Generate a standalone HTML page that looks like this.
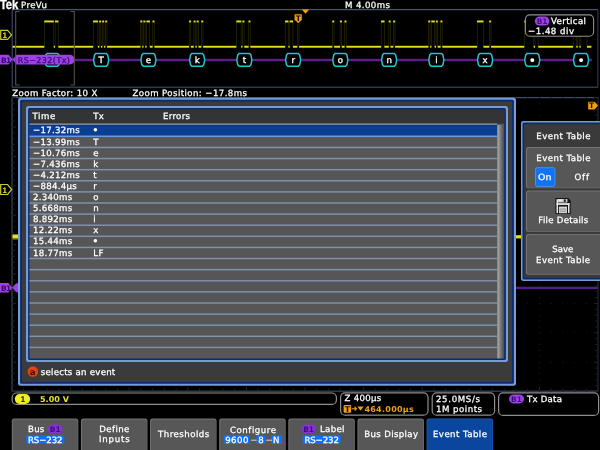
<!DOCTYPE html>
<html lang="en"><head><meta charset="utf-8"><title>Tek RS-232 Event Table</title>
<style>
html,body{margin:0;padding:0;background:#000;}
body{width:600px;height:450px;position:relative;overflow:hidden;font-family:'DejaVu Sans','Liberation Sans',sans-serif;}
#scr{position:absolute;left:0;top:0;width:600px;height:450px;overflow:hidden;background:#000;}
svg{position:absolute;left:0;top:0;}
.t{position:absolute;white-space:pre;margin:0;padding:0;}
#tx{position:absolute;left:0;top:0;width:600px;height:450px;will-change:transform;text-rendering:geometricPrecision;}
</style></head><body><div id="scr">
<svg width="600" height="450" viewBox="0 0 600 450">
<rect x="12.00" y="9.00" width="586.00" height="1.20" fill="#40587a"/>
<rect x="12.00" y="86.60" width="586.00" height="1.20" fill="#33486a"/>
<rect x="11.60" y="9.00" width="1.20" height="78.50" fill="#33486a"/>
<rect x="597.20" y="9.00" width="1.20" height="78.50" fill="#263650"/>
<rect x="44.11" y="21.50" width="0.70" height="25.30" fill="#2c2a00"/>
<rect x="53.27" y="21.50" width="0.70" height="25.30" fill="#2c2a00"/>
<rect x="54.79" y="21.50" width="0.70" height="25.30" fill="#2c2a00"/>
<rect x="57.85" y="21.50" width="0.70" height="25.30" fill="#2c2a00"/>
<rect x="92.90" y="21.50" width="0.70" height="25.30" fill="#2c2a00"/>
<rect x="97.47" y="21.50" width="0.70" height="25.30" fill="#2c2a00"/>
<rect x="99.00" y="21.50" width="0.70" height="25.30" fill="#2c2a00"/>
<rect x="100.53" y="21.50" width="0.70" height="25.30" fill="#2c2a00"/>
<rect x="102.05" y="21.50" width="0.70" height="25.30" fill="#2c2a00"/>
<rect x="103.58" y="21.50" width="0.70" height="25.30" fill="#2c2a00"/>
<rect x="105.10" y="21.50" width="0.70" height="25.30" fill="#2c2a00"/>
<rect x="106.63" y="21.50" width="0.70" height="25.30" fill="#2c2a00"/>
<rect x="140.22" y="21.50" width="0.70" height="25.30" fill="#2c2a00"/>
<rect x="141.74" y="21.50" width="0.70" height="25.30" fill="#2c2a00"/>
<rect x="143.27" y="21.50" width="0.70" height="25.30" fill="#2c2a00"/>
<rect x="144.79" y="21.50" width="0.70" height="25.30" fill="#2c2a00"/>
<rect x="146.32" y="21.50" width="0.70" height="25.30" fill="#2c2a00"/>
<rect x="149.37" y="21.50" width="0.70" height="25.30" fill="#2c2a00"/>
<rect x="152.42" y="21.50" width="0.70" height="25.30" fill="#2c2a00"/>
<rect x="153.95" y="21.50" width="0.70" height="25.30" fill="#2c2a00"/>
<rect x="188.91" y="21.50" width="0.70" height="25.30" fill="#2c2a00"/>
<rect x="190.44" y="21.50" width="0.70" height="25.30" fill="#2c2a00"/>
<rect x="193.49" y="21.50" width="0.70" height="25.30" fill="#2c2a00"/>
<rect x="195.02" y="21.50" width="0.70" height="25.30" fill="#2c2a00"/>
<rect x="196.54" y="21.50" width="0.70" height="25.30" fill="#2c2a00"/>
<rect x="198.07" y="21.50" width="0.70" height="25.30" fill="#2c2a00"/>
<rect x="201.12" y="21.50" width="0.70" height="25.30" fill="#2c2a00"/>
<rect x="202.65" y="21.50" width="0.70" height="25.30" fill="#2c2a00"/>
<rect x="236.14" y="21.50" width="0.70" height="25.30" fill="#2c2a00"/>
<rect x="240.72" y="21.50" width="0.70" height="25.30" fill="#2c2a00"/>
<rect x="242.25" y="21.50" width="0.70" height="25.30" fill="#2c2a00"/>
<rect x="243.77" y="21.50" width="0.70" height="25.30" fill="#2c2a00"/>
<rect x="248.35" y="21.50" width="0.70" height="25.30" fill="#2c2a00"/>
<rect x="249.88" y="21.50" width="0.70" height="25.30" fill="#2c2a00"/>
<rect x="284.89" y="21.50" width="0.70" height="25.30" fill="#2c2a00"/>
<rect x="287.95" y="21.50" width="0.70" height="25.30" fill="#2c2a00"/>
<rect x="289.47" y="21.50" width="0.70" height="25.30" fill="#2c2a00"/>
<rect x="292.52" y="21.50" width="0.70" height="25.30" fill="#2c2a00"/>
<rect x="297.10" y="21.50" width="0.70" height="25.30" fill="#2c2a00"/>
<rect x="298.63" y="21.50" width="0.70" height="25.30" fill="#2c2a00"/>
<rect x="332.13" y="21.50" width="0.70" height="25.30" fill="#2c2a00"/>
<rect x="333.66" y="21.50" width="0.70" height="25.30" fill="#2c2a00"/>
<rect x="339.76" y="21.50" width="0.70" height="25.30" fill="#2c2a00"/>
<rect x="341.29" y="21.50" width="0.70" height="25.30" fill="#2c2a00"/>
<rect x="344.34" y="21.50" width="0.70" height="25.30" fill="#2c2a00"/>
<rect x="345.87" y="21.50" width="0.70" height="25.30" fill="#2c2a00"/>
<rect x="380.89" y="21.50" width="0.70" height="25.30" fill="#2c2a00"/>
<rect x="383.94" y="21.50" width="0.70" height="25.30" fill="#2c2a00"/>
<rect x="388.52" y="21.50" width="0.70" height="25.30" fill="#2c2a00"/>
<rect x="390.04" y="21.50" width="0.70" height="25.30" fill="#2c2a00"/>
<rect x="393.09" y="21.50" width="0.70" height="25.30" fill="#2c2a00"/>
<rect x="394.62" y="21.50" width="0.70" height="25.30" fill="#2c2a00"/>
<rect x="428.12" y="21.50" width="0.70" height="25.30" fill="#2c2a00"/>
<rect x="429.64" y="21.50" width="0.70" height="25.30" fill="#2c2a00"/>
<rect x="431.17" y="21.50" width="0.70" height="25.30" fill="#2c2a00"/>
<rect x="434.22" y="21.50" width="0.70" height="25.30" fill="#2c2a00"/>
<rect x="435.75" y="21.50" width="0.70" height="25.30" fill="#2c2a00"/>
<rect x="437.27" y="21.50" width="0.70" height="25.30" fill="#2c2a00"/>
<rect x="440.33" y="21.50" width="0.70" height="25.30" fill="#2c2a00"/>
<rect x="441.85" y="21.50" width="0.70" height="25.30" fill="#2c2a00"/>
<rect x="476.87" y="21.50" width="0.70" height="25.30" fill="#2c2a00"/>
<rect x="482.98" y="21.50" width="0.70" height="25.30" fill="#2c2a00"/>
<rect x="489.08" y="21.50" width="0.70" height="25.30" fill="#2c2a00"/>
<rect x="490.61" y="21.50" width="0.70" height="25.30" fill="#2c2a00"/>
<rect x="524.05" y="21.50" width="0.70" height="25.30" fill="#2c2a00"/>
<rect x="533.20" y="21.50" width="0.70" height="25.30" fill="#2c2a00"/>
<rect x="534.73" y="21.50" width="0.70" height="25.30" fill="#2c2a00"/>
<rect x="537.78" y="21.50" width="0.70" height="25.30" fill="#2c2a00"/>
<rect x="572.83" y="21.50" width="0.70" height="25.30" fill="#2c2a00"/>
<rect x="575.88" y="21.50" width="0.70" height="25.30" fill="#2c2a00"/>
<rect x="577.41" y="21.50" width="0.70" height="25.30" fill="#2c2a00"/>
<rect x="578.93" y="21.50" width="0.70" height="25.30" fill="#2c2a00"/>
<rect x="580.46" y="21.50" width="0.70" height="25.30" fill="#2c2a00"/>
<rect x="586.56" y="21.50" width="0.70" height="25.30" fill="#2c2a00"/>
<rect x="12.60" y="45.80" width="31.76" height="1.90" fill="#e6e01e"/>
<rect x="44.26" y="20.50" width="9.56" height="1.90" fill="#e6e01e"/>
<rect x="53.72" y="45.80" width="1.33" height="1.90" fill="#e6e01e"/>
<rect x="54.94" y="20.50" width="3.45" height="1.90" fill="#e6e01e"/>
<rect x="58.30" y="45.80" width="34.85" height="1.90" fill="#e6e01e"/>
<rect x="93.05" y="20.50" width="4.98" height="1.90" fill="#e6e01e"/>
<rect x="97.92" y="45.80" width="1.33" height="1.90" fill="#e6e01e"/>
<rect x="99.15" y="20.50" width="1.93" height="1.90" fill="#e6e01e"/>
<rect x="100.98" y="45.80" width="1.33" height="1.90" fill="#e6e01e"/>
<rect x="102.20" y="20.50" width="1.93" height="1.90" fill="#e6e01e"/>
<rect x="104.03" y="45.80" width="1.33" height="1.90" fill="#e6e01e"/>
<rect x="105.25" y="20.50" width="1.93" height="1.90" fill="#e6e01e"/>
<rect x="107.08" y="45.80" width="33.39" height="1.90" fill="#e6e01e"/>
<rect x="140.37" y="20.50" width="1.93" height="1.90" fill="#e6e01e"/>
<rect x="142.19" y="45.80" width="1.33" height="1.90" fill="#e6e01e"/>
<rect x="143.42" y="20.50" width="1.93" height="1.90" fill="#e6e01e"/>
<rect x="145.24" y="45.80" width="1.33" height="1.90" fill="#e6e01e"/>
<rect x="146.47" y="20.50" width="3.45" height="1.90" fill="#e6e01e"/>
<rect x="149.82" y="45.80" width="2.85" height="1.90" fill="#e6e01e"/>
<rect x="152.57" y="20.50" width="1.93" height="1.90" fill="#e6e01e"/>
<rect x="154.40" y="45.80" width="34.76" height="1.90" fill="#e6e01e"/>
<rect x="189.06" y="20.50" width="1.93" height="1.90" fill="#e6e01e"/>
<rect x="190.89" y="45.80" width="2.85" height="1.90" fill="#e6e01e"/>
<rect x="193.64" y="20.50" width="1.93" height="1.90" fill="#e6e01e"/>
<rect x="195.47" y="45.80" width="1.33" height="1.90" fill="#e6e01e"/>
<rect x="196.69" y="20.50" width="1.93" height="1.90" fill="#e6e01e"/>
<rect x="198.52" y="45.80" width="2.85" height="1.90" fill="#e6e01e"/>
<rect x="201.27" y="20.50" width="1.93" height="1.90" fill="#e6e01e"/>
<rect x="203.10" y="45.80" width="33.30" height="1.90" fill="#e6e01e"/>
<rect x="236.29" y="20.50" width="4.98" height="1.90" fill="#e6e01e"/>
<rect x="241.17" y="45.80" width="1.33" height="1.90" fill="#e6e01e"/>
<rect x="242.40" y="20.50" width="1.93" height="1.90" fill="#e6e01e"/>
<rect x="244.22" y="45.80" width="4.38" height="1.90" fill="#e6e01e"/>
<rect x="248.50" y="20.50" width="1.93" height="1.90" fill="#e6e01e"/>
<rect x="250.33" y="45.80" width="34.81" height="1.90" fill="#e6e01e"/>
<rect x="285.04" y="20.50" width="3.45" height="1.90" fill="#e6e01e"/>
<rect x="288.40" y="45.80" width="1.33" height="1.90" fill="#e6e01e"/>
<rect x="289.62" y="20.50" width="3.45" height="1.90" fill="#e6e01e"/>
<rect x="292.97" y="45.80" width="4.38" height="1.90" fill="#e6e01e"/>
<rect x="297.25" y="20.50" width="1.93" height="1.90" fill="#e6e01e"/>
<rect x="299.08" y="45.80" width="33.30" height="1.90" fill="#e6e01e"/>
<rect x="332.28" y="20.50" width="1.93" height="1.90" fill="#e6e01e"/>
<rect x="334.11" y="45.80" width="5.90" height="1.90" fill="#e6e01e"/>
<rect x="339.91" y="20.50" width="1.93" height="1.90" fill="#e6e01e"/>
<rect x="341.74" y="45.80" width="2.85" height="1.90" fill="#e6e01e"/>
<rect x="344.49" y="20.50" width="1.93" height="1.90" fill="#e6e01e"/>
<rect x="346.32" y="45.80" width="34.82" height="1.90" fill="#e6e01e"/>
<rect x="381.04" y="20.50" width="3.45" height="1.90" fill="#e6e01e"/>
<rect x="384.39" y="45.80" width="4.38" height="1.90" fill="#e6e01e"/>
<rect x="388.67" y="20.50" width="1.93" height="1.90" fill="#e6e01e"/>
<rect x="390.49" y="45.80" width="2.85" height="1.90" fill="#e6e01e"/>
<rect x="393.24" y="20.50" width="1.93" height="1.90" fill="#e6e01e"/>
<rect x="395.07" y="45.80" width="33.30" height="1.90" fill="#e6e01e"/>
<rect x="428.27" y="20.50" width="1.93" height="1.90" fill="#e6e01e"/>
<rect x="430.09" y="45.80" width="1.33" height="1.90" fill="#e6e01e"/>
<rect x="431.32" y="20.50" width="3.45" height="1.90" fill="#e6e01e"/>
<rect x="434.67" y="45.80" width="1.33" height="1.90" fill="#e6e01e"/>
<rect x="435.90" y="20.50" width="1.93" height="1.90" fill="#e6e01e"/>
<rect x="437.72" y="45.80" width="2.85" height="1.90" fill="#e6e01e"/>
<rect x="440.48" y="20.50" width="1.93" height="1.90" fill="#e6e01e"/>
<rect x="442.30" y="45.80" width="34.82" height="1.90" fill="#e6e01e"/>
<rect x="477.02" y="20.50" width="6.50" height="1.90" fill="#e6e01e"/>
<rect x="483.43" y="45.80" width="5.90" height="1.90" fill="#e6e01e"/>
<rect x="489.23" y="20.50" width="1.93" height="1.90" fill="#e6e01e"/>
<rect x="491.06" y="45.80" width="33.24" height="1.90" fill="#e6e01e"/>
<rect x="524.20" y="20.50" width="9.56" height="1.90" fill="#e6e01e"/>
<rect x="533.65" y="45.80" width="1.33" height="1.90" fill="#e6e01e"/>
<rect x="534.88" y="20.50" width="3.45" height="1.90" fill="#e6e01e"/>
<rect x="538.23" y="45.80" width="34.85" height="1.90" fill="#e6e01e"/>
<rect x="572.98" y="20.50" width="3.45" height="1.90" fill="#e6e01e"/>
<rect x="576.33" y="45.80" width="1.33" height="1.90" fill="#e6e01e"/>
<rect x="577.56" y="20.50" width="1.93" height="1.90" fill="#e6e01e"/>
<rect x="579.38" y="45.80" width="1.33" height="1.90" fill="#e6e01e"/>
<rect x="580.61" y="20.50" width="6.50" height="1.90" fill="#e6e01e"/>
<rect x="587.01" y="45.80" width="4.39" height="1.90" fill="#e6e01e"/>
<rect x="75.00" y="58.80" width="517.00" height="2.40" fill="#5a1c90"/>
<polygon points="47.16,53.50 57.46,53.50 58.86,54.90 59.86,59.90 58.86,64.90 57.46,66.30 47.16,66.30 45.76,64.90 44.76,59.90 45.76,54.90" fill="#000" stroke="#22c4cc" stroke-width="1.5"/>
<polygon points="95.95,53.50 106.25,53.50 107.65,54.90 108.65,59.90 107.65,64.90 106.25,66.30 95.95,66.30 94.55,64.90 93.55,59.90 94.55,54.90" fill="#000" stroke="#22c4cc" stroke-width="1.5"/>
<polygon points="143.27,53.50 153.57,53.50 154.97,54.90 155.97,59.90 154.97,64.90 153.57,66.30 143.27,66.30 141.87,64.90 140.87,59.90 141.87,54.90" fill="#000" stroke="#22c4cc" stroke-width="1.5"/>
<polygon points="191.96,53.50 202.26,53.50 203.66,54.90 204.66,59.90 203.66,64.90 202.26,66.30 191.96,66.30 190.56,64.90 189.56,59.90 190.56,54.90" fill="#000" stroke="#22c4cc" stroke-width="1.5"/>
<polygon points="239.19,53.50 249.49,53.50 250.89,54.90 251.89,59.90 250.89,64.90 249.49,66.30 239.19,66.30 237.79,64.90 236.79,59.90 237.79,54.90" fill="#000" stroke="#22c4cc" stroke-width="1.5"/>
<polygon points="287.94,53.50 298.24,53.50 299.64,54.90 300.64,59.90 299.64,64.90 298.24,66.30 287.94,66.30 286.54,64.90 285.54,59.90 286.54,54.90" fill="#000" stroke="#22c4cc" stroke-width="1.5"/>
<polygon points="335.18,53.50 345.48,53.50 346.88,54.90 347.88,59.90 346.88,64.90 345.48,66.30 335.18,66.30 333.78,64.90 332.78,59.90 333.78,54.90" fill="#000" stroke="#22c4cc" stroke-width="1.5"/>
<polygon points="383.94,53.50 394.24,53.50 395.64,54.90 396.64,59.90 395.64,64.90 394.24,66.30 383.94,66.30 382.54,64.90 381.54,59.90 382.54,54.90" fill="#000" stroke="#22c4cc" stroke-width="1.5"/>
<polygon points="431.17,53.50 441.47,53.50 442.87,54.90 443.87,59.90 442.87,64.90 441.47,66.30 431.17,66.30 429.77,64.90 428.77,59.90 429.77,54.90" fill="#000" stroke="#22c4cc" stroke-width="1.5"/>
<polygon points="479.92,53.50 490.22,53.50 491.62,54.90 492.62,59.90 491.62,64.90 490.22,66.30 479.92,66.30 478.52,64.90 477.52,59.90 478.52,54.90" fill="#000" stroke="#22c4cc" stroke-width="1.5"/>
<polygon points="527.10,53.50 537.40,53.50 538.80,54.90 539.80,59.90 538.80,64.90 537.40,66.30 527.10,66.30 525.70,64.90 524.70,59.90 525.70,54.90" fill="#000" stroke="#22c4cc" stroke-width="1.5"/>
<polygon points="575.88,53.50 586.18,53.50 587.58,54.90 588.58,59.90 587.58,64.90 586.18,66.30 575.88,66.30 574.48,64.90 573.48,59.90 574.48,54.90" fill="#000" stroke="#22c4cc" stroke-width="1.5"/>
<path d="M12.5,59.6 L16.4,54.7 L69.4,54.7 Q74.4,54.7 74.4,59.6 Q74.4,64.5 69.4,64.5 L16.4,64.5 Z" fill="#a040e8"/>
<path d="M0,54.7 L8.6,54.7 L12.6,59.6 L8.6,64.5 L0,64.5 Z" fill="#a040e8"/>
<path d="M0.7,30.4 L7.6,30.4 L11.6,34.9 L7.6,39.4 L0.7,39.4 Z" fill="#000" stroke="#c8c834" stroke-width="1.2"/>
<path d="M19.5,11.5 L15.7,11.5 L15.7,85 L19.5,85" fill="none" stroke="#565242" stroke-width="1.1"/>
<path d="M70.5,11.5 L74.3,11.5 L74.3,85 L70.5,85" fill="none" stroke="#565242" stroke-width="1.1"/>
<path d="M301.8,9.6 L309.2,9.6 L305.5,13.8 Z" fill="#f0a018"/>
<path d="M294.6,14.2 L301.8,14.2 L301.8,20 L298.2,22.8 L294.6,20 Z" fill="#f0a018"/>
<rect x="525.40" y="14.90" width="68.20" height="21.40" fill="#000" rx="4.5" stroke="#909090" stroke-width="1.1"/>
<rect x="534.80" y="16.60" width="14.60" height="9.00" fill="#a040e8" rx="4.5"/>
<rect x="12.00" y="97.00" width="586.00" height="1.20" fill="#3a4e6e"/>
<rect x="12.00" y="390.60" width="586.00" height="1.20" fill="#3e4654"/>
<rect x="11.40" y="97.60" width="1.20" height="294.00" fill="#3a4858"/>
<rect x="597.40" y="97.60" width="1.20" height="294.00" fill="#1e2838"/>
<g fill="#171d25"><rect x="11.5" y="97.1" width="1" height="1"/><rect x="11.5" y="103.0" width="1" height="1"/><rect x="11.5" y="108.9" width="1" height="1"/><rect x="11.5" y="114.7" width="1" height="1"/><rect x="11.5" y="120.6" width="1" height="1"/><rect x="11.5" y="126.5" width="1" height="1"/><rect x="11.5" y="132.4" width="1" height="1"/><rect x="11.5" y="138.3" width="1" height="1"/><rect x="11.5" y="144.1" width="1" height="1"/><rect x="11.5" y="150.0" width="1" height="1"/><rect x="11.5" y="155.9" width="1" height="1"/><rect x="11.5" y="161.8" width="1" height="1"/><rect x="11.5" y="167.7" width="1" height="1"/><rect x="11.5" y="173.5" width="1" height="1"/><rect x="11.5" y="179.4" width="1" height="1"/><rect x="11.5" y="185.3" width="1" height="1"/><rect x="11.5" y="191.2" width="1" height="1"/><rect x="11.5" y="197.1" width="1" height="1"/><rect x="11.5" y="202.9" width="1" height="1"/><rect x="11.5" y="208.8" width="1" height="1"/><rect x="11.5" y="214.7" width="1" height="1"/><rect x="11.5" y="220.6" width="1" height="1"/><rect x="11.5" y="226.5" width="1" height="1"/><rect x="11.5" y="232.3" width="1" height="1"/><rect x="11.5" y="238.2" width="1" height="1"/><rect x="11.5" y="244.1" width="1" height="1"/><rect x="11.5" y="250.0" width="1" height="1"/><rect x="11.5" y="255.9" width="1" height="1"/><rect x="11.5" y="261.7" width="1" height="1"/><rect x="11.5" y="267.6" width="1" height="1"/><rect x="11.5" y="273.5" width="1" height="1"/><rect x="11.5" y="279.4" width="1" height="1"/><rect x="11.5" y="285.3" width="1" height="1"/><rect x="11.5" y="291.1" width="1" height="1"/><rect x="11.5" y="297.0" width="1" height="1"/><rect x="11.5" y="302.9" width="1" height="1"/><rect x="11.5" y="308.8" width="1" height="1"/><rect x="11.5" y="314.7" width="1" height="1"/><rect x="11.5" y="320.5" width="1" height="1"/><rect x="11.5" y="326.4" width="1" height="1"/><rect x="11.5" y="332.3" width="1" height="1"/><rect x="11.5" y="338.2" width="1" height="1"/><rect x="11.5" y="344.1" width="1" height="1"/><rect x="11.5" y="349.9" width="1" height="1"/><rect x="11.5" y="355.8" width="1" height="1"/><rect x="11.5" y="361.7" width="1" height="1"/><rect x="11.5" y="367.6" width="1" height="1"/><rect x="11.5" y="373.5" width="1" height="1"/><rect x="11.5" y="379.3" width="1" height="1"/><rect x="11.5" y="385.2" width="1" height="1"/><rect x="11.5" y="391.1" width="1" height="1"/><rect x="538.9" y="97.1" width="1" height="1"/><rect x="538.9" y="103.0" width="1" height="1"/><rect x="538.9" y="108.9" width="1" height="1"/><rect x="538.9" y="114.7" width="1" height="1"/><rect x="538.9" y="120.6" width="1" height="1"/><rect x="538.9" y="126.5" width="1" height="1"/><rect x="538.9" y="132.4" width="1" height="1"/><rect x="538.9" y="138.3" width="1" height="1"/><rect x="538.9" y="144.1" width="1" height="1"/><rect x="538.9" y="150.0" width="1" height="1"/><rect x="538.9" y="155.9" width="1" height="1"/><rect x="538.9" y="161.8" width="1" height="1"/><rect x="538.9" y="167.7" width="1" height="1"/><rect x="538.9" y="173.5" width="1" height="1"/><rect x="538.9" y="179.4" width="1" height="1"/><rect x="538.9" y="185.3" width="1" height="1"/><rect x="538.9" y="191.2" width="1" height="1"/><rect x="538.9" y="197.1" width="1" height="1"/><rect x="538.9" y="202.9" width="1" height="1"/><rect x="538.9" y="208.8" width="1" height="1"/><rect x="538.9" y="214.7" width="1" height="1"/><rect x="538.9" y="220.6" width="1" height="1"/><rect x="538.9" y="226.5" width="1" height="1"/><rect x="538.9" y="232.3" width="1" height="1"/><rect x="538.9" y="238.2" width="1" height="1"/><rect x="538.9" y="244.1" width="1" height="1"/><rect x="538.9" y="250.0" width="1" height="1"/><rect x="538.9" y="255.9" width="1" height="1"/><rect x="538.9" y="261.7" width="1" height="1"/><rect x="538.9" y="267.6" width="1" height="1"/><rect x="538.9" y="273.5" width="1" height="1"/><rect x="538.9" y="279.4" width="1" height="1"/><rect x="538.9" y="285.3" width="1" height="1"/><rect x="538.9" y="291.1" width="1" height="1"/><rect x="538.9" y="297.0" width="1" height="1"/><rect x="538.9" y="302.9" width="1" height="1"/><rect x="538.9" y="308.8" width="1" height="1"/><rect x="538.9" y="314.7" width="1" height="1"/><rect x="538.9" y="320.5" width="1" height="1"/><rect x="538.9" y="326.4" width="1" height="1"/><rect x="538.9" y="332.3" width="1" height="1"/><rect x="538.9" y="338.2" width="1" height="1"/><rect x="538.9" y="344.1" width="1" height="1"/><rect x="538.9" y="349.9" width="1" height="1"/><rect x="538.9" y="355.8" width="1" height="1"/><rect x="538.9" y="361.7" width="1" height="1"/><rect x="538.9" y="367.6" width="1" height="1"/><rect x="538.9" y="373.5" width="1" height="1"/><rect x="538.9" y="379.3" width="1" height="1"/><rect x="538.9" y="385.2" width="1" height="1"/><rect x="538.9" y="391.1" width="1" height="1"/><rect x="597.5" y="97.1" width="1" height="1"/><rect x="597.5" y="103.0" width="1" height="1"/><rect x="597.5" y="108.9" width="1" height="1"/><rect x="597.5" y="114.7" width="1" height="1"/><rect x="597.5" y="120.6" width="1" height="1"/><rect x="597.5" y="126.5" width="1" height="1"/><rect x="597.5" y="132.4" width="1" height="1"/><rect x="597.5" y="138.3" width="1" height="1"/><rect x="597.5" y="144.1" width="1" height="1"/><rect x="597.5" y="150.0" width="1" height="1"/><rect x="597.5" y="155.9" width="1" height="1"/><rect x="597.5" y="161.8" width="1" height="1"/><rect x="597.5" y="167.7" width="1" height="1"/><rect x="597.5" y="173.5" width="1" height="1"/><rect x="597.5" y="179.4" width="1" height="1"/><rect x="597.5" y="185.3" width="1" height="1"/><rect x="597.5" y="191.2" width="1" height="1"/><rect x="597.5" y="197.1" width="1" height="1"/><rect x="597.5" y="202.9" width="1" height="1"/><rect x="597.5" y="208.8" width="1" height="1"/><rect x="597.5" y="214.7" width="1" height="1"/><rect x="597.5" y="220.6" width="1" height="1"/><rect x="597.5" y="226.5" width="1" height="1"/><rect x="597.5" y="232.3" width="1" height="1"/><rect x="597.5" y="238.2" width="1" height="1"/><rect x="597.5" y="244.1" width="1" height="1"/><rect x="597.5" y="250.0" width="1" height="1"/><rect x="597.5" y="255.9" width="1" height="1"/><rect x="597.5" y="261.7" width="1" height="1"/><rect x="597.5" y="267.6" width="1" height="1"/><rect x="597.5" y="273.5" width="1" height="1"/><rect x="597.5" y="279.4" width="1" height="1"/><rect x="597.5" y="285.3" width="1" height="1"/><rect x="597.5" y="291.1" width="1" height="1"/><rect x="597.5" y="297.0" width="1" height="1"/><rect x="597.5" y="302.9" width="1" height="1"/><rect x="597.5" y="308.8" width="1" height="1"/><rect x="597.5" y="314.7" width="1" height="1"/><rect x="597.5" y="320.5" width="1" height="1"/><rect x="597.5" y="326.4" width="1" height="1"/><rect x="597.5" y="332.3" width="1" height="1"/><rect x="597.5" y="338.2" width="1" height="1"/><rect x="597.5" y="344.1" width="1" height="1"/><rect x="597.5" y="349.9" width="1" height="1"/><rect x="597.5" y="355.8" width="1" height="1"/><rect x="597.5" y="361.7" width="1" height="1"/><rect x="597.5" y="367.6" width="1" height="1"/><rect x="597.5" y="373.5" width="1" height="1"/><rect x="597.5" y="379.3" width="1" height="1"/><rect x="597.5" y="385.2" width="1" height="1"/><rect x="597.5" y="391.1" width="1" height="1"/><rect x="11.5" y="97.1" width="1" height="1"/><rect x="515.5" y="97.1" width="1" height="1"/><rect x="527.2" y="97.1" width="1" height="1"/><rect x="538.9" y="97.1" width="1" height="1"/><rect x="550.6" y="97.1" width="1" height="1"/><rect x="562.3" y="97.1" width="1" height="1"/><rect x="574.1" y="97.1" width="1" height="1"/><rect x="585.8" y="97.1" width="1" height="1"/><rect x="597.5" y="97.1" width="1" height="1"/><rect x="11.5" y="126.5" width="1" height="1"/><rect x="515.5" y="126.5" width="1" height="1"/><rect x="527.2" y="126.5" width="1" height="1"/><rect x="538.9" y="126.5" width="1" height="1"/><rect x="550.6" y="126.5" width="1" height="1"/><rect x="562.3" y="126.5" width="1" height="1"/><rect x="574.1" y="126.5" width="1" height="1"/><rect x="585.8" y="126.5" width="1" height="1"/><rect x="597.5" y="126.5" width="1" height="1"/><rect x="11.5" y="155.9" width="1" height="1"/><rect x="515.5" y="155.9" width="1" height="1"/><rect x="527.2" y="155.9" width="1" height="1"/><rect x="538.9" y="155.9" width="1" height="1"/><rect x="550.6" y="155.9" width="1" height="1"/><rect x="562.3" y="155.9" width="1" height="1"/><rect x="574.1" y="155.9" width="1" height="1"/><rect x="585.8" y="155.9" width="1" height="1"/><rect x="597.5" y="155.9" width="1" height="1"/><rect x="11.5" y="185.3" width="1" height="1"/><rect x="515.5" y="185.3" width="1" height="1"/><rect x="527.2" y="185.3" width="1" height="1"/><rect x="538.9" y="185.3" width="1" height="1"/><rect x="550.6" y="185.3" width="1" height="1"/><rect x="562.3" y="185.3" width="1" height="1"/><rect x="574.1" y="185.3" width="1" height="1"/><rect x="585.8" y="185.3" width="1" height="1"/><rect x="597.5" y="185.3" width="1" height="1"/><rect x="11.5" y="214.7" width="1" height="1"/><rect x="515.5" y="214.7" width="1" height="1"/><rect x="527.2" y="214.7" width="1" height="1"/><rect x="538.9" y="214.7" width="1" height="1"/><rect x="550.6" y="214.7" width="1" height="1"/><rect x="562.3" y="214.7" width="1" height="1"/><rect x="574.1" y="214.7" width="1" height="1"/><rect x="585.8" y="214.7" width="1" height="1"/><rect x="597.5" y="214.7" width="1" height="1"/><rect x="11.5" y="244.1" width="1" height="1"/><rect x="515.5" y="244.1" width="1" height="1"/><rect x="527.2" y="244.1" width="1" height="1"/><rect x="538.9" y="244.1" width="1" height="1"/><rect x="550.6" y="244.1" width="1" height="1"/><rect x="562.3" y="244.1" width="1" height="1"/><rect x="574.1" y="244.1" width="1" height="1"/><rect x="585.8" y="244.1" width="1" height="1"/><rect x="597.5" y="244.1" width="1" height="1"/><rect x="11.5" y="273.5" width="1" height="1"/><rect x="515.5" y="273.5" width="1" height="1"/><rect x="527.2" y="273.5" width="1" height="1"/><rect x="538.9" y="273.5" width="1" height="1"/><rect x="550.6" y="273.5" width="1" height="1"/><rect x="562.3" y="273.5" width="1" height="1"/><rect x="574.1" y="273.5" width="1" height="1"/><rect x="585.8" y="273.5" width="1" height="1"/><rect x="597.5" y="273.5" width="1" height="1"/><rect x="11.5" y="302.9" width="1" height="1"/><rect x="515.5" y="302.9" width="1" height="1"/><rect x="527.2" y="302.9" width="1" height="1"/><rect x="538.9" y="302.9" width="1" height="1"/><rect x="550.6" y="302.9" width="1" height="1"/><rect x="562.3" y="302.9" width="1" height="1"/><rect x="574.1" y="302.9" width="1" height="1"/><rect x="585.8" y="302.9" width="1" height="1"/><rect x="597.5" y="302.9" width="1" height="1"/><rect x="11.5" y="332.3" width="1" height="1"/><rect x="515.5" y="332.3" width="1" height="1"/><rect x="527.2" y="332.3" width="1" height="1"/><rect x="538.9" y="332.3" width="1" height="1"/><rect x="550.6" y="332.3" width="1" height="1"/><rect x="562.3" y="332.3" width="1" height="1"/><rect x="574.1" y="332.3" width="1" height="1"/><rect x="585.8" y="332.3" width="1" height="1"/><rect x="597.5" y="332.3" width="1" height="1"/><rect x="11.5" y="361.7" width="1" height="1"/><rect x="515.5" y="361.7" width="1" height="1"/><rect x="527.2" y="361.7" width="1" height="1"/><rect x="538.9" y="361.7" width="1" height="1"/><rect x="550.6" y="361.7" width="1" height="1"/><rect x="562.3" y="361.7" width="1" height="1"/><rect x="574.1" y="361.7" width="1" height="1"/><rect x="585.8" y="361.7" width="1" height="1"/><rect x="597.5" y="361.7" width="1" height="1"/><rect x="11.5" y="391.1" width="1" height="1"/><rect x="515.5" y="391.1" width="1" height="1"/><rect x="527.2" y="391.1" width="1" height="1"/><rect x="538.9" y="391.1" width="1" height="1"/><rect x="550.6" y="391.1" width="1" height="1"/><rect x="562.3" y="391.1" width="1" height="1"/><rect x="574.1" y="391.1" width="1" height="1"/><rect x="585.8" y="391.1" width="1" height="1"/><rect x="597.5" y="391.1" width="1" height="1"/></g>
<g fill="#1c2430"><rect x="11.5" y="387.2" width="1" height="3.4"/><rect x="23.2" y="388.6" width="1" height="2.0"/><rect x="34.9" y="388.6" width="1" height="2.0"/><rect x="46.7" y="388.6" width="1" height="2.0"/><rect x="58.4" y="388.6" width="1" height="2.0"/><rect x="70.1" y="387.2" width="1" height="3.4"/><rect x="81.8" y="388.6" width="1" height="2.0"/><rect x="93.5" y="388.6" width="1" height="2.0"/><rect x="105.3" y="388.6" width="1" height="2.0"/><rect x="117.0" y="388.6" width="1" height="2.0"/><rect x="128.7" y="387.2" width="1" height="3.4"/><rect x="140.4" y="388.6" width="1" height="2.0"/><rect x="152.1" y="388.6" width="1" height="2.0"/><rect x="163.9" y="388.6" width="1" height="2.0"/><rect x="175.6" y="388.6" width="1" height="2.0"/><rect x="187.3" y="387.2" width="1" height="3.4"/><rect x="199.0" y="388.6" width="1" height="2.0"/><rect x="210.7" y="388.6" width="1" height="2.0"/><rect x="222.5" y="388.6" width="1" height="2.0"/><rect x="234.2" y="388.6" width="1" height="2.0"/><rect x="245.9" y="387.2" width="1" height="3.4"/><rect x="257.6" y="388.6" width="1" height="2.0"/><rect x="269.3" y="388.6" width="1" height="2.0"/><rect x="281.1" y="388.6" width="1" height="2.0"/><rect x="292.8" y="388.6" width="1" height="2.0"/><rect x="304.5" y="387.2" width="1" height="3.4"/><rect x="316.2" y="388.6" width="1" height="2.0"/><rect x="327.9" y="388.6" width="1" height="2.0"/><rect x="339.7" y="388.6" width="1" height="2.0"/><rect x="351.4" y="388.6" width="1" height="2.0"/><rect x="363.1" y="387.2" width="1" height="3.4"/><rect x="374.8" y="388.6" width="1" height="2.0"/><rect x="386.5" y="388.6" width="1" height="2.0"/><rect x="398.3" y="388.6" width="1" height="2.0"/><rect x="410.0" y="388.6" width="1" height="2.0"/><rect x="421.7" y="387.2" width="1" height="3.4"/><rect x="433.4" y="388.6" width="1" height="2.0"/><rect x="445.1" y="388.6" width="1" height="2.0"/><rect x="456.9" y="388.6" width="1" height="2.0"/><rect x="468.6" y="388.6" width="1" height="2.0"/><rect x="480.3" y="387.2" width="1" height="3.4"/><rect x="492.0" y="388.6" width="1" height="2.0"/><rect x="503.7" y="388.6" width="1" height="2.0"/><rect x="515.5" y="388.6" width="1" height="2.0"/><rect x="527.2" y="388.6" width="1" height="2.0"/><rect x="538.9" y="387.2" width="1" height="3.4"/><rect x="550.6" y="388.6" width="1" height="2.0"/><rect x="562.3" y="388.6" width="1" height="2.0"/><rect x="574.1" y="388.6" width="1" height="2.0"/><rect x="585.8" y="388.6" width="1" height="2.0"/><rect x="597.5" y="387.2" width="1" height="3.4"/><rect x="12.6" y="97.1" width="3.4" height="1"/><rect x="594.0" y="97.1" width="3.4" height="1"/><rect x="12.6" y="103.0" width="2.0" height="1"/><rect x="595.4" y="103.0" width="2.0" height="1"/><rect x="12.6" y="108.9" width="2.0" height="1"/><rect x="595.4" y="108.9" width="2.0" height="1"/><rect x="12.6" y="114.7" width="2.0" height="1"/><rect x="595.4" y="114.7" width="2.0" height="1"/><rect x="12.6" y="120.6" width="2.0" height="1"/><rect x="595.4" y="120.6" width="2.0" height="1"/><rect x="12.6" y="126.5" width="3.4" height="1"/><rect x="594.0" y="126.5" width="3.4" height="1"/><rect x="12.6" y="132.4" width="2.0" height="1"/><rect x="595.4" y="132.4" width="2.0" height="1"/><rect x="12.6" y="138.3" width="2.0" height="1"/><rect x="595.4" y="138.3" width="2.0" height="1"/><rect x="12.6" y="144.1" width="2.0" height="1"/><rect x="595.4" y="144.1" width="2.0" height="1"/><rect x="12.6" y="150.0" width="2.0" height="1"/><rect x="595.4" y="150.0" width="2.0" height="1"/><rect x="12.6" y="155.9" width="3.4" height="1"/><rect x="594.0" y="155.9" width="3.4" height="1"/><rect x="12.6" y="161.8" width="2.0" height="1"/><rect x="595.4" y="161.8" width="2.0" height="1"/><rect x="12.6" y="167.7" width="2.0" height="1"/><rect x="595.4" y="167.7" width="2.0" height="1"/><rect x="12.6" y="173.5" width="2.0" height="1"/><rect x="595.4" y="173.5" width="2.0" height="1"/><rect x="12.6" y="179.4" width="2.0" height="1"/><rect x="595.4" y="179.4" width="2.0" height="1"/><rect x="12.6" y="185.3" width="3.4" height="1"/><rect x="594.0" y="185.3" width="3.4" height="1"/><rect x="12.6" y="191.2" width="2.0" height="1"/><rect x="595.4" y="191.2" width="2.0" height="1"/><rect x="12.6" y="197.1" width="2.0" height="1"/><rect x="595.4" y="197.1" width="2.0" height="1"/><rect x="12.6" y="202.9" width="2.0" height="1"/><rect x="595.4" y="202.9" width="2.0" height="1"/><rect x="12.6" y="208.8" width="2.0" height="1"/><rect x="595.4" y="208.8" width="2.0" height="1"/><rect x="12.6" y="214.7" width="3.4" height="1"/><rect x="594.0" y="214.7" width="3.4" height="1"/><rect x="12.6" y="220.6" width="2.0" height="1"/><rect x="595.4" y="220.6" width="2.0" height="1"/><rect x="12.6" y="226.5" width="2.0" height="1"/><rect x="595.4" y="226.5" width="2.0" height="1"/><rect x="12.6" y="232.3" width="2.0" height="1"/><rect x="595.4" y="232.3" width="2.0" height="1"/><rect x="12.6" y="238.2" width="2.0" height="1"/><rect x="595.4" y="238.2" width="2.0" height="1"/><rect x="12.6" y="244.1" width="3.4" height="1"/><rect x="594.0" y="244.1" width="3.4" height="1"/><rect x="12.6" y="250.0" width="2.0" height="1"/><rect x="595.4" y="250.0" width="2.0" height="1"/><rect x="12.6" y="255.9" width="2.0" height="1"/><rect x="595.4" y="255.9" width="2.0" height="1"/><rect x="12.6" y="261.7" width="2.0" height="1"/><rect x="595.4" y="261.7" width="2.0" height="1"/><rect x="12.6" y="267.6" width="2.0" height="1"/><rect x="595.4" y="267.6" width="2.0" height="1"/><rect x="12.6" y="273.5" width="3.4" height="1"/><rect x="594.0" y="273.5" width="3.4" height="1"/><rect x="12.6" y="279.4" width="2.0" height="1"/><rect x="595.4" y="279.4" width="2.0" height="1"/><rect x="12.6" y="285.3" width="2.0" height="1"/><rect x="595.4" y="285.3" width="2.0" height="1"/><rect x="12.6" y="291.1" width="2.0" height="1"/><rect x="595.4" y="291.1" width="2.0" height="1"/><rect x="12.6" y="297.0" width="2.0" height="1"/><rect x="595.4" y="297.0" width="2.0" height="1"/><rect x="12.6" y="302.9" width="3.4" height="1"/><rect x="594.0" y="302.9" width="3.4" height="1"/><rect x="12.6" y="308.8" width="2.0" height="1"/><rect x="595.4" y="308.8" width="2.0" height="1"/><rect x="12.6" y="314.7" width="2.0" height="1"/><rect x="595.4" y="314.7" width="2.0" height="1"/><rect x="12.6" y="320.5" width="2.0" height="1"/><rect x="595.4" y="320.5" width="2.0" height="1"/><rect x="12.6" y="326.4" width="2.0" height="1"/><rect x="595.4" y="326.4" width="2.0" height="1"/><rect x="12.6" y="332.3" width="3.4" height="1"/><rect x="594.0" y="332.3" width="3.4" height="1"/><rect x="12.6" y="338.2" width="2.0" height="1"/><rect x="595.4" y="338.2" width="2.0" height="1"/><rect x="12.6" y="344.1" width="2.0" height="1"/><rect x="595.4" y="344.1" width="2.0" height="1"/><rect x="12.6" y="349.9" width="2.0" height="1"/><rect x="595.4" y="349.9" width="2.0" height="1"/><rect x="12.6" y="355.8" width="2.0" height="1"/><rect x="595.4" y="355.8" width="2.0" height="1"/><rect x="12.6" y="361.7" width="3.4" height="1"/><rect x="594.0" y="361.7" width="3.4" height="1"/><rect x="12.6" y="367.6" width="2.0" height="1"/><rect x="595.4" y="367.6" width="2.0" height="1"/><rect x="12.6" y="373.5" width="2.0" height="1"/><rect x="595.4" y="373.5" width="2.0" height="1"/><rect x="12.6" y="379.3" width="2.0" height="1"/><rect x="595.4" y="379.3" width="2.0" height="1"/><rect x="12.6" y="385.2" width="2.0" height="1"/><rect x="595.4" y="385.2" width="2.0" height="1"/><rect x="12.6" y="391.1" width="3.4" height="1"/><rect x="594.0" y="391.1" width="3.4" height="1"/></g>
<rect x="12.50" y="235.00" width="6.00" height="3.60" fill="#e6e01e"/>
<rect x="12.50" y="234.00" width="6.00" height="1.00" fill="#807a10"/>
<rect x="12.50" y="238.60" width="6.00" height="1.00" fill="#807a10"/>
<rect x="516.00" y="235.20" width="6.00" height="3.20" fill="#e6e01e"/>
<rect x="516.00" y="286.70" width="82.00" height="2.40" fill="#561c8a"/>
<path d="M0,283 L8.3,283 L12.4,287.7 L8.3,292.4 L0,292.4 Z" fill="#a040e8"/>
<path d="M12.4,287.7 L14.3,285.2 Q15.8,283 18.3,283 L18.3,292.4 Q15.8,292.4 14.3,290.2 Z" fill="#a040e8"/>
<path d="M0.7,184.5 L7.6,184.5 L11.7,189.5 L7.6,194.5 L0.7,194.5 Z" fill="#000" stroke="#c8c834" stroke-width="1.2"/>
<path d="M588.2,101.8 L594.6,101.8 L598,105.6 L594.6,109.4 L588.2,109.4 Z" fill="#f0a018"/>
<rect x="18.00" y="97.70" width="498.00" height="288.10" fill="#749cd8" rx="2.5"/>
<rect x="20.10" y="99.80" width="493.80" height="283.90" fill="#0d2a70" rx="1.5"/>
<rect x="21.90" y="101.60" width="490.20" height="280.30" fill="#3b3b3b" rx="0.5"/>
<rect x="26.00" y="106.00" width="482.00" height="256.00" fill="#749cd8" rx="2.5"/>
<rect x="28.10" y="108.10" width="477.80" height="251.80" fill="#0d2a70" rx="1.5"/>
<rect x="29.90" y="109.90" width="474.20" height="248.20" fill="#555" rx="0.5"/>
<rect x="29.50" y="109.50" width="475.00" height="14.20" fill="#333436"/>
<rect x="29.50" y="123.70" width="467.70" height="234.80" fill="#565656"/>
<rect x="29.50" y="124.90" width="467.70" height="10.70" fill="#0b3f92"/>
<rect x="29.50" y="124.90" width="467.70" height="1.00" fill="#083478"/>
<rect x="29.50" y="123.50" width="467.70" height="1.45" fill="#80899c"/>
<rect x="29.50" y="135.60" width="467.70" height="1.45" fill="#6a9ade"/>
<rect x="29.50" y="146.71" width="467.70" height="1.45" fill="#8093ac"/>
<rect x="29.50" y="157.82" width="467.70" height="1.45" fill="#8093ac"/>
<rect x="29.50" y="168.93" width="467.70" height="1.45" fill="#8093ac"/>
<rect x="29.50" y="180.04" width="467.70" height="1.45" fill="#8093ac"/>
<rect x="29.50" y="191.15" width="467.70" height="1.45" fill="#8093ac"/>
<rect x="29.50" y="202.26" width="467.70" height="1.45" fill="#8093ac"/>
<rect x="29.50" y="213.37" width="467.70" height="1.45" fill="#8093ac"/>
<rect x="29.50" y="224.48" width="467.70" height="1.45" fill="#8093ac"/>
<rect x="29.50" y="235.59" width="467.70" height="1.45" fill="#8093ac"/>
<rect x="29.50" y="246.70" width="467.70" height="1.45" fill="#8093ac"/>
<rect x="29.50" y="257.81" width="467.70" height="1.45" fill="#8093ac"/>
<rect x="29.50" y="268.92" width="467.70" height="1.45" fill="#8093ac"/>
<rect x="29.50" y="280.03" width="467.70" height="1.45" fill="#8093ac"/>
<rect x="29.50" y="291.14" width="467.70" height="1.45" fill="#8093ac"/>
<rect x="29.50" y="302.25" width="467.70" height="1.45" fill="#8093ac"/>
<rect x="29.50" y="313.36" width="467.70" height="1.45" fill="#8093ac"/>
<rect x="29.50" y="324.47" width="467.70" height="1.45" fill="#8093ac"/>
<rect x="29.50" y="335.58" width="467.70" height="1.45" fill="#8093ac"/>
<rect x="29.50" y="346.69" width="467.70" height="1.45" fill="#8093ac"/>
<defs><linearGradient id="sb" x1="0" x2="1" y1="0" y2="0"><stop offset="0" stop-color="#909090"/><stop offset="0.15" stop-color="#a4a4a4"/><stop offset="0.45" stop-color="#7c7c7c"/><stop offset="1" stop-color="#4a4a4a"/></linearGradient></defs>
<rect x="497.20" y="125.00" width="6.90" height="233.50" fill="url(#sb)"/>
<circle cx="32.9" cy="371.5" r="5.2" fill="#e2440e"/>
<rect x="521.00" y="121.00" width="85.00" height="160.00" fill="#749cd8" rx="2.5"/>
<rect x="522.50" y="122.50" width="82.00" height="157.00" fill="#0d2a70" rx="1.5"/>
<rect x="524.20" y="124.20" width="78.60" height="153.60" fill="#3a3a3a" rx="0.5"/>
<rect x="526.00" y="147.00" width="78.00" height="41.30" fill="#747474" rx="2.5"/>
<rect x="527.00" y="148.00" width="76.40" height="39.70" fill="#575757" rx="2.0"/>
<rect x="526.00" y="190.50" width="78.00" height="41.50" fill="#747474" rx="2.5"/>
<rect x="527.00" y="191.50" width="76.40" height="39.90" fill="#575757" rx="2.0"/>
<rect x="526.00" y="234.10" width="78.00" height="40.60" fill="#747474" rx="2.5"/>
<rect x="527.00" y="235.10" width="76.40" height="39.00" fill="#575757" rx="2.0"/>
<rect x="535.50" y="167.70" width="19.40" height="18.70" fill="#1272f4" rx="1.5"/>
<rect x="535.50" y="167.70" width="19.40" height="18.70" fill="none" rx="1.5" stroke="#4a9aff" stroke-width="0.8"/>
<g><path d="M555.4,198.1 H568.2 L570.7,200.5 V213.9 H555.4 Z" fill="#161616"/><rect x="556.5" y="199.2" width="1.5" height="13.9" fill="#e6e6e6"/><rect x="558" y="199" width="9.4" height="3.5" fill="#cfcfcf"/><rect x="559.2" y="199.4" width="2.2" height="1.6" fill="#f4f4f4"/><rect x="563.8" y="199.3" width="2" height="2.7" fill="#2a2a2a"/><rect x="556.5" y="203.2" width="13" height="1.7" fill="#f0f0f0"/><rect x="568" y="203.2" width="1.5" height="9.9" fill="#e6e6e6"/><rect x="558.9" y="206.6" width="8.1" height="6.6" fill="#d6d6d6"/><rect x="559.6" y="208.6" width="6.7" height="0.9" fill="#808080"/><rect x="559.6" y="210.7" width="6.7" height="0.9" fill="#808080"/></g>
<rect x="12.10" y="393.00" width="324.30" height="11.40" fill="#000" rx="4.5" stroke="#90908a" stroke-width="1.2"/>
<rect x="14.80" y="394.10" width="15.30" height="9.80" fill="#f0ee20" rx="4.9"/>
<rect x="340.60" y="392.80" width="87.40" height="22.40" fill="#000" rx="4.5" stroke="#8e8e8e" stroke-width="1.2"/>
<rect x="343.60" y="405.10" width="7.50" height="7.60" fill="#f0a018" rx="1"/>
<path d="M351.8,408.8 L356.2,408.8 M354.6,407 L356.4,408.8 L354.6,410.6" stroke="#f0a018" stroke-width="1.1" fill="none"/>
<path d="M357.4,406.6 L363.6,406.6 L360.5,410.8 Z" fill="#f0a018"/>
<rect x="432.20" y="392.80" width="62.40" height="22.40" fill="#000" rx="4.5" stroke="#8e8e8e" stroke-width="1.2"/>
<rect x="498.60" y="392.80" width="100.00" height="22.60" fill="#000" rx="4.5" stroke="#8e8e8e" stroke-width="1.2"/>
<rect x="509.00" y="394.40" width="15.00" height="9.00" fill="#a040e8" rx="4.5"/>
<rect x="11.80" y="418.40" width="66.50" height="36.60" fill="#747474" rx="2.5"/>
<rect x="12.80" y="419.40" width="64.90" height="35.00" fill="#575757" rx="2.0"/>
<rect x="80.93" y="418.40" width="66.50" height="36.60" fill="#747474" rx="2.5"/>
<rect x="81.93" y="419.40" width="64.90" height="35.00" fill="#575757" rx="2.0"/>
<rect x="150.06" y="418.40" width="66.50" height="36.60" fill="#747474" rx="2.5"/>
<rect x="151.06" y="419.40" width="64.90" height="35.00" fill="#575757" rx="2.0"/>
<rect x="219.19" y="418.40" width="66.50" height="36.60" fill="#747474" rx="2.5"/>
<rect x="220.19" y="419.40" width="64.90" height="35.00" fill="#575757" rx="2.0"/>
<rect x="288.32" y="418.40" width="66.50" height="36.60" fill="#747474" rx="2.5"/>
<rect x="289.32" y="419.40" width="64.90" height="35.00" fill="#575757" rx="2.0"/>
<rect x="357.45" y="418.40" width="66.50" height="36.60" fill="#747474" rx="2.5"/>
<rect x="358.45" y="419.40" width="64.90" height="35.00" fill="#575757" rx="2.0"/>
<rect x="426.58" y="418.40" width="66.50" height="36.60" fill="#1a58b4" rx="2.5"/>
<rect x="427.58" y="419.40" width="64.90" height="35.00" fill="#0b469e" rx="2.0"/>
<rect x="48.00" y="424.40" width="14.40" height="9.20" fill="#8a30d8" rx="4.6"/>
<rect x="26.20" y="435.20" width="38.00" height="8.60" fill="#1070f0"/>
<rect x="223.80" y="435.20" width="25.80" height="8.80" fill="#1070f0"/>
<rect x="256.50" y="435.20" width="9.00" height="8.80" fill="#1070f0"/>
<rect x="271.20" y="435.20" width="11.00" height="8.80" fill="#1070f0"/>
<rect x="301.40" y="424.40" width="14.40" height="9.20" fill="#8a30d8" rx="4.6"/>
<rect x="302.60" y="435.20" width="38.00" height="8.60" fill="#1070f0"/>
</svg>
<div id="tx">
<span class="t" style="left:0.20px;top:-2px;font-size:13.5px;line-height:13.5px;color:#fff;font-weight:bold;letter-spacing:-0.300px;transform-origin:0 0;transform:scaleX(0.840);font-family:'Liberation Sans',sans-serif;-webkit-text-stroke:0.3px #fff;">Tek</span>
<span class="t" style="left:21.00px;top:2px;font-size:8.6px;line-height:8.6px;color:#fff;letter-spacing:0.394px;-webkit-text-stroke:0.26px #fff;">PreVu</span>
<span class="t" style="left:345.00px;top:2px;font-size:8.6px;line-height:8.6px;color:#fff;letter-spacing:0.406px;-webkit-text-stroke:0.26px #fff;">M 4.00ms</span>
<span class="t" style="left:17.70px;top:57px;font-size:8px;line-height:8px;color:#3a1078;letter-spacing:0.425px;-webkit-text-stroke:0.35px #3a1078;">RS−232(Tx)</span>
<span class="t" style="left:98.52px;top:57px;font-size:8.6px;line-height:8.6px;color:#fff;letter-spacing:0.300px;-webkit-text-stroke:0.3px #fff;">T</span>
<span class="t" style="left:145.82px;top:57px;font-size:8.6px;line-height:8.6px;color:#fff;letter-spacing:0.300px;-webkit-text-stroke:0.3px #fff;">e</span>
<span class="t" style="left:194.67px;top:57px;font-size:8.6px;line-height:8.6px;color:#fff;letter-spacing:0.300px;-webkit-text-stroke:0.3px #fff;">k</span>
<span class="t" style="left:242.71px;top:57px;font-size:8.6px;line-height:8.6px;color:#fff;letter-spacing:0.300px;-webkit-text-stroke:0.3px #fff;">t</span>
<span class="t" style="left:291.38px;top:57px;font-size:8.6px;line-height:8.6px;color:#fff;letter-spacing:0.300px;-webkit-text-stroke:0.3px #fff;">r</span>
<span class="t" style="left:337.75px;top:57px;font-size:8.6px;line-height:8.6px;color:#fff;letter-spacing:0.300px;-webkit-text-stroke:0.3px #fff;">o</span>
<span class="t" style="left:386.41px;top:57px;font-size:8.6px;line-height:8.6px;color:#fff;letter-spacing:0.300px;-webkit-text-stroke:0.3px #fff;">n</span>
<span class="t" style="left:435.17px;top:57px;font-size:8.6px;line-height:8.6px;color:#fff;letter-spacing:0.300px;-webkit-text-stroke:0.3px #fff;">i</span>
<span class="t" style="left:482.58px;top:57px;font-size:8.6px;line-height:8.6px;color:#fff;letter-spacing:0.300px;-webkit-text-stroke:0.3px #fff;">x</span>
<span class="t" style="left:528.39px;top:55px;font-size:13px;line-height:13px;color:#fff;">•</span>
<span class="t" style="left:577.18px;top:55px;font-size:13px;line-height:13px;color:#fff;">•</span>
<span class="t" style="left:0.90px;top:57px;font-size:7.5px;line-height:7.5px;color:#2e0c66;font-weight:bold;letter-spacing:-0.500px;">B1</span>
<span class="t" style="left:2.38px;top:32px;font-size:8px;line-height:8px;color:#e4e438;font-weight:bold;font-family:'Liberation Sans',sans-serif;">1</span>
<span class="t" style="left:295.64px;top:15px;font-size:7.5px;line-height:7.5px;color:#201000;font-weight:bold;">T</span>
<span class="t" style="left:536.63px;top:18px;font-size:7.5px;line-height:7.5px;color:#3a1078;font-weight:bold;">B1</span>
<span class="t" style="left:551.00px;top:18px;font-size:8.6px;line-height:8.6px;color:#fff;letter-spacing:0.401px;-webkit-text-stroke:0.3px #fff;">Vertical</span>
<span class="t" style="left:528.00px;top:28px;font-size:8.6px;line-height:8.6px;color:#fff;letter-spacing:0.497px;-webkit-text-stroke:0.3px #fff;">−1.48 div</span>
<span class="t" style="left:12.30px;top:90px;font-size:8.6px;line-height:8.6px;color:#fff;letter-spacing:0.394px;-webkit-text-stroke:0.26px #fff;">Zoom Factor: 10 X</span>
<span class="t" style="left:132.50px;top:90px;font-size:8.6px;line-height:8.6px;color:#fff;letter-spacing:0.412px;-webkit-text-stroke:0.26px #fff;">Zoom Position: −17.8ms</span>
<span class="t" style="left:0.90px;top:285px;font-size:7.5px;line-height:7.5px;color:#2e0c66;font-weight:bold;letter-spacing:-0.500px;">B1</span>
<span class="t" style="left:2.38px;top:187px;font-size:8px;line-height:8px;color:#e4e438;font-weight:bold;font-family:'Liberation Sans',sans-serif;">1</span>
<span class="t" style="left:589.04px;top:102px;font-size:7.5px;line-height:7.5px;color:#201000;font-weight:bold;">T</span>
<span class="t" style="left:32.60px;top:113px;font-size:8.6px;line-height:8.6px;color:#fff;letter-spacing:0.518px;-webkit-text-stroke:0.26px #fff;">Time</span>
<span class="t" style="left:93.30px;top:113px;font-size:8.6px;line-height:8.6px;color:#fff;letter-spacing:0.300px;-webkit-text-stroke:0.26px #fff;">Tx</span>
<span class="t" style="left:163.00px;top:113px;font-size:8.6px;line-height:8.6px;color:#fff;letter-spacing:0.311px;-webkit-text-stroke:0.26px #fff;">Errors</span>
<span class="t" style="left:33.00px;top:127px;font-size:8.6px;line-height:8.6px;color:#fff;letter-spacing:0.300px;-webkit-text-stroke:0.26px #fff;">−17.32ms</span>
<span class="t" style="left:91.94px;top:125px;font-size:11.5px;line-height:11.5px;color:#fff;">•</span>
<span class="t" style="left:33.00px;top:139px;font-size:8.6px;line-height:8.6px;color:#fff;letter-spacing:0.300px;-webkit-text-stroke:0.26px #fff;">−13.99ms</span>
<span class="t" style="left:93.30px;top:139px;font-size:8.6px;line-height:8.6px;color:#fff;letter-spacing:0.300px;-webkit-text-stroke:0.26px #fff;">T</span>
<span class="t" style="left:33.00px;top:150px;font-size:8.6px;line-height:8.6px;color:#fff;letter-spacing:0.300px;-webkit-text-stroke:0.26px #fff;">−10.76ms</span>
<span class="t" style="left:93.30px;top:150px;font-size:8.6px;line-height:8.6px;color:#fff;letter-spacing:0.300px;-webkit-text-stroke:0.26px #fff;">e</span>
<span class="t" style="left:33.00px;top:161px;font-size:8.6px;line-height:8.6px;color:#fff;letter-spacing:0.300px;-webkit-text-stroke:0.26px #fff;">−7.436ms</span>
<span class="t" style="left:93.30px;top:161px;font-size:8.6px;line-height:8.6px;color:#fff;letter-spacing:0.300px;-webkit-text-stroke:0.26px #fff;">k</span>
<span class="t" style="left:33.00px;top:172px;font-size:8.6px;line-height:8.6px;color:#fff;letter-spacing:0.300px;-webkit-text-stroke:0.26px #fff;">−4.212ms</span>
<span class="t" style="left:93.30px;top:172px;font-size:8.6px;line-height:8.6px;color:#fff;letter-spacing:0.300px;-webkit-text-stroke:0.26px #fff;">t</span>
<span class="t" style="left:33.00px;top:183px;font-size:8.6px;line-height:8.6px;color:#fff;letter-spacing:0.300px;-webkit-text-stroke:0.26px #fff;">−884.4µs</span>
<span class="t" style="left:93.30px;top:183px;font-size:8.6px;line-height:8.6px;color:#fff;letter-spacing:0.300px;-webkit-text-stroke:0.26px #fff;">r</span>
<span class="t" style="left:33.00px;top:194px;font-size:8.6px;line-height:8.6px;color:#fff;letter-spacing:0.300px;-webkit-text-stroke:0.26px #fff;">2.340ms</span>
<span class="t" style="left:93.30px;top:194px;font-size:8.6px;line-height:8.6px;color:#fff;letter-spacing:0.300px;-webkit-text-stroke:0.26px #fff;">o</span>
<span class="t" style="left:33.00px;top:205px;font-size:8.6px;line-height:8.6px;color:#fff;letter-spacing:0.300px;-webkit-text-stroke:0.26px #fff;">5.668ms</span>
<span class="t" style="left:93.30px;top:205px;font-size:8.6px;line-height:8.6px;color:#fff;letter-spacing:0.300px;-webkit-text-stroke:0.26px #fff;">n</span>
<span class="t" style="left:33.00px;top:216px;font-size:8.6px;line-height:8.6px;color:#fff;letter-spacing:0.300px;-webkit-text-stroke:0.26px #fff;">8.892ms</span>
<span class="t" style="left:93.30px;top:216px;font-size:8.6px;line-height:8.6px;color:#fff;letter-spacing:0.300px;-webkit-text-stroke:0.26px #fff;">i</span>
<span class="t" style="left:33.00px;top:227px;font-size:8.6px;line-height:8.6px;color:#fff;letter-spacing:0.300px;-webkit-text-stroke:0.26px #fff;">12.22ms</span>
<span class="t" style="left:93.30px;top:227px;font-size:8.6px;line-height:8.6px;color:#fff;letter-spacing:0.300px;-webkit-text-stroke:0.26px #fff;">x</span>
<span class="t" style="left:33.00px;top:238px;font-size:8.6px;line-height:8.6px;color:#fff;letter-spacing:0.300px;-webkit-text-stroke:0.26px #fff;">15.44ms</span>
<span class="t" style="left:91.94px;top:236px;font-size:11.5px;line-height:11.5px;color:#fff;">•</span>
<span class="t" style="left:33.00px;top:250px;font-size:8.6px;line-height:8.6px;color:#fff;letter-spacing:0.300px;-webkit-text-stroke:0.26px #fff;">18.77ms</span>
<span class="t" style="left:93.30px;top:250px;font-size:8.6px;line-height:8.6px;color:#fff;letter-spacing:0.300px;-webkit-text-stroke:0.26px #fff;">LF</span>
<span class="t" style="left:29.70px;top:369px;font-size:8.6px;line-height:8.6px;color:#3a0c00;font-weight:bold;letter-spacing:0.300px;">a</span>
<span class="t" style="left:40.80px;top:369px;font-size:8.6px;line-height:8.6px;color:#fff;letter-spacing:0.252px;-webkit-text-stroke:0.26px #fff;">selects an event</span>
<span class="t" style="left:536.30px;top:133px;font-size:8.6px;line-height:8.6px;color:#fff;letter-spacing:0.459px;-webkit-text-stroke:0.26px #fff;">Event Table</span>
<span class="t" style="left:536.30px;top:155px;font-size:8.6px;line-height:8.6px;color:#fff;letter-spacing:0.459px;-webkit-text-stroke:0.26px #fff;">Event Table</span>
<span class="t" style="left:537.70px;top:174px;font-size:8.6px;line-height:8.6px;color:#fff;letter-spacing:0.200px;transform-origin:0 0;transform:scaleX(1.090);-webkit-text-stroke:0.26px #fff;">On</span>
<span class="t" style="left:574.60px;top:174px;font-size:8.6px;line-height:8.6px;color:#fff;letter-spacing:0.753px;-webkit-text-stroke:0.26px #fff;">Off</span>
<span class="t" style="left:538.30px;top:217px;font-size:8.6px;line-height:8.6px;color:#fff;letter-spacing:0.278px;-webkit-text-stroke:0.26px #fff;">File Details</span>
<span class="t" style="left:552.30px;top:246px;font-size:8.6px;line-height:8.6px;color:#fff;letter-spacing:-0.070px;-webkit-text-stroke:0.26px #fff;">Save</span>
<span class="t" style="left:536.10px;top:257px;font-size:8.6px;line-height:8.6px;color:#fff;letter-spacing:0.439px;-webkit-text-stroke:0.26px #fff;">Event Table</span>
<span class="t" style="left:20.44px;top:395px;font-size:8.5px;line-height:8.5px;color:#202000;font-weight:bold;font-family:'Liberation Sans',sans-serif;">1</span>
<span class="t" style="left:40.00px;top:396px;font-size:8px;line-height:8px;color:#e8e428;font-weight:bold;letter-spacing:0.057px;">5.00 V</span>
<span class="t" style="left:344.50px;top:395px;font-size:8.6px;line-height:8.6px;color:#fff;letter-spacing:0.301px;-webkit-text-stroke:0.26px #fff;">Z 400µs</span>
<span class="t" style="left:344.67px;top:406px;font-size:8px;line-height:8px;color:#201000;font-weight:bold;">T</span>
<span class="t" style="left:364.40px;top:406px;font-size:8px;line-height:8px;color:#f0a018;font-weight:bold;letter-spacing:0.289px;">464.000µs</span>
<span class="t" style="left:436.00px;top:396px;font-size:8.6px;line-height:8.6px;color:#fff;letter-spacing:0.656px;-webkit-text-stroke:0.26px #fff;">25.0MS/s</span>
<span class="t" style="left:436.00px;top:406px;font-size:8.6px;line-height:8.6px;color:#fff;letter-spacing:0.495px;-webkit-text-stroke:0.26px #fff;">1M points</span>
<span class="t" style="left:511.03px;top:396px;font-size:7.5px;line-height:7.5px;color:#3a1078;font-weight:bold;">B1</span>
<span class="t" style="left:527.00px;top:396px;font-size:8.6px;line-height:8.6px;color:#fff;letter-spacing:0.231px;-webkit-text-stroke:0.26px #fff;">Tx Data</span>
<span class="t" style="left:28.00px;top:426px;font-size:8.6px;line-height:8.6px;color:#fff;letter-spacing:0.234px;-webkit-text-stroke:0.26px #fff;">Bus</span>
<span class="t" style="left:49.73px;top:426px;font-size:7.5px;line-height:7.5px;color:#3a1078;font-weight:bold;">B1</span>
<span class="t" style="left:28.00px;top:437px;font-size:8.6px;line-height:8.6px;color:#fff;letter-spacing:-0.111px;-webkit-text-stroke:0.26px #fff;">RS−232</span>
<span class="t" style="left:99.30px;top:426px;font-size:8.6px;line-height:8.6px;color:#fff;letter-spacing:0.386px;-webkit-text-stroke:0.26px #fff;">Define</span>
<span class="t" style="left:98.90px;top:436px;font-size:8.6px;line-height:8.6px;color:#fff;letter-spacing:0.830px;-webkit-text-stroke:0.26px #fff;">Inputs</span>
<span class="t" style="left:158.00px;top:431px;font-size:8.6px;line-height:8.6px;color:#fff;letter-spacing:0.482px;-webkit-text-stroke:0.26px #fff;">Thresholds</span>
<span class="t" style="left:230.00px;top:427px;font-size:8.6px;line-height:8.6px;color:#fff;letter-spacing:0.540px;-webkit-text-stroke:0.26px #fff;">Configure</span>
<span class="t" style="left:225.20px;top:437px;font-size:8.6px;line-height:8.6px;color:#fff;letter-spacing:0.438px;-webkit-text-stroke:0.26px #fff;">9600</span>
<span class="t" style="left:250.20px;top:437px;font-size:8.6px;line-height:8.6px;color:#ccc;letter-spacing:0.300px;-webkit-text-stroke:0.26px #ccc;">−</span>
<span class="t" style="left:258.20px;top:437px;font-size:8.6px;line-height:8.6px;color:#fff;letter-spacing:0.300px;-webkit-text-stroke:0.26px #fff;">8</span>
<span class="t" style="left:265.60px;top:437px;font-size:8.6px;line-height:8.6px;color:#ccc;letter-spacing:0.300px;-webkit-text-stroke:0.26px #ccc;">−</span>
<span class="t" style="left:273.00px;top:437px;font-size:8.6px;line-height:8.6px;color:#fff;letter-spacing:0.300px;-webkit-text-stroke:0.26px #fff;">N</span>
<span class="t" style="left:303.13px;top:426px;font-size:7.5px;line-height:7.5px;color:#3a1078;font-weight:bold;">B1</span>
<span class="t" style="left:320.00px;top:426px;font-size:8.6px;line-height:8.6px;color:#fff;letter-spacing:0.325px;-webkit-text-stroke:0.26px #fff;">Label</span>
<span class="t" style="left:304.40px;top:437px;font-size:8.6px;line-height:8.6px;color:#fff;letter-spacing:-0.111px;-webkit-text-stroke:0.26px #fff;">RS−232</span>
<span class="t" style="left:364.30px;top:431px;font-size:8.6px;line-height:8.6px;color:#fff;letter-spacing:0.344px;-webkit-text-stroke:0.26px #fff;">Bus Display</span>
<span class="t" style="left:433.00px;top:431px;font-size:8.6px;line-height:8.6px;color:#fff;letter-spacing:0.439px;-webkit-text-stroke:0.26px #fff;">Event Table</span>
</div>
</div></body></html>
